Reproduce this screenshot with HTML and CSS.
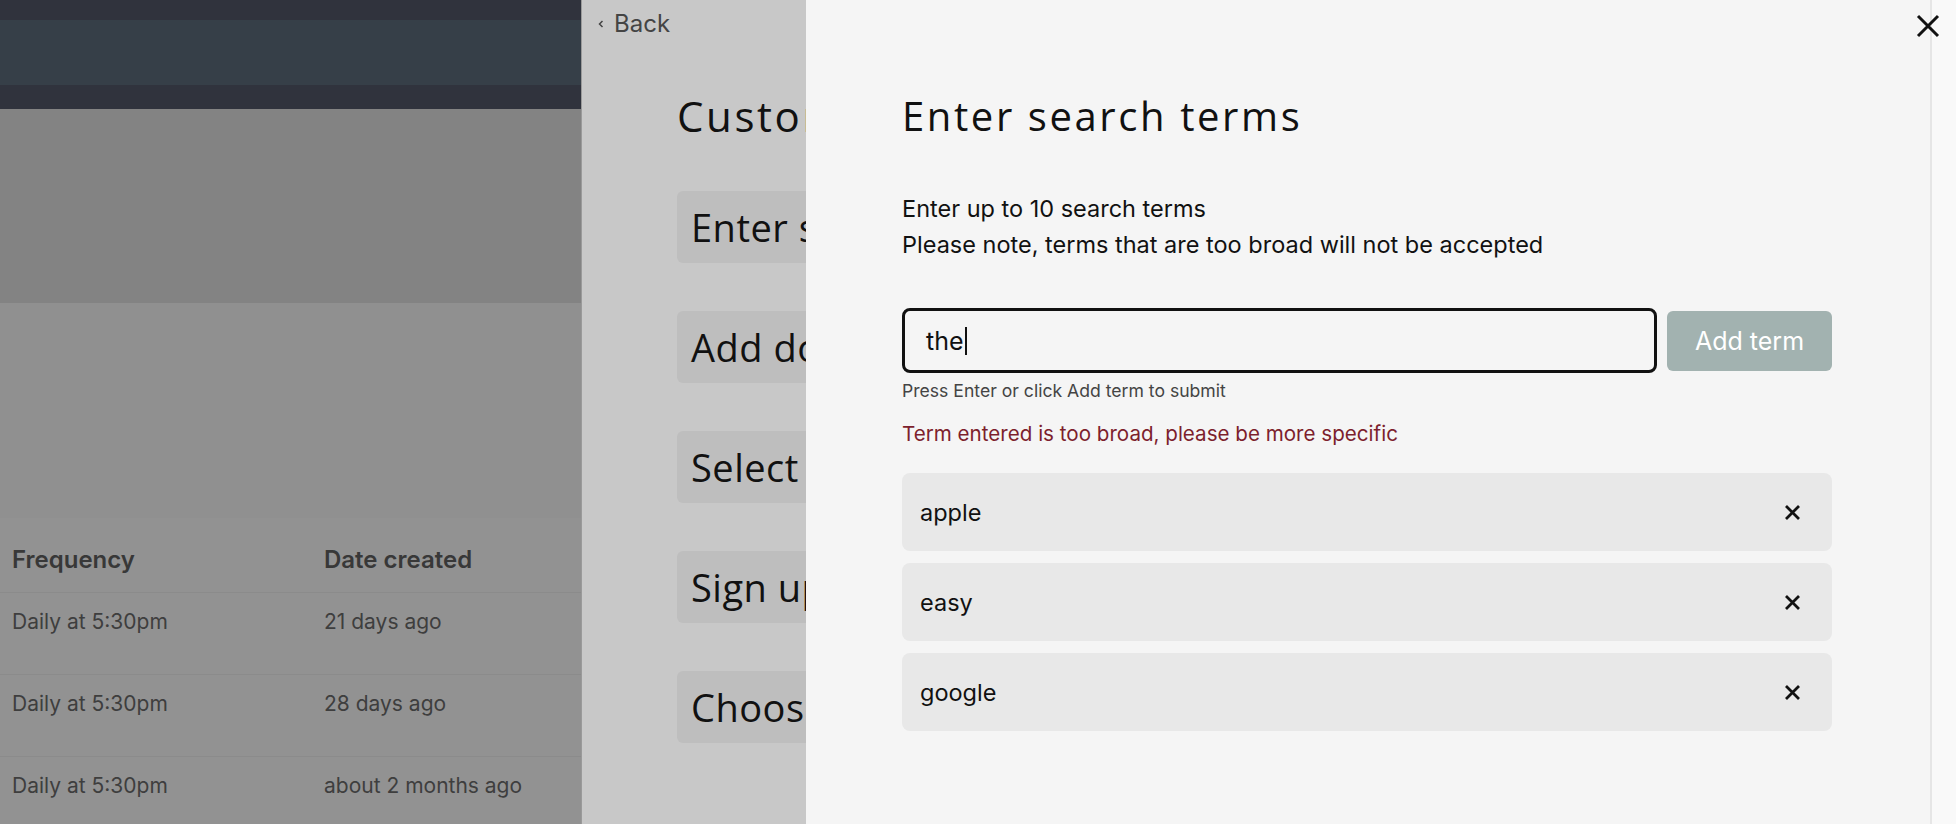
FILE: index.html
```html
<!DOCTYPE html>
<html lang="en">
<head>
    <meta charset="UTF-8">
    <meta name="viewport" content="width=device-width, initial-scale=1.0">
    <title>Alerts</title>
    <link rel="stylesheet" href="styles.css">
</head>
<body>
    <div class="app">
        <header class="topbar">
            <div class="topbar-inner"></div>
        </header>
        <section class="hero"></section>
        <section class="alerts">
            <div class="alerts-intro"></div>
            <table class="alert-table">
                <thead>
                    <tr><th>Frequency</th><th>Date created</th></tr>
                </thead>
                <tbody>
                    <tr><td>Daily at 5:30pm</td><td>21 days ago</td></tr>
                    <tr><td>Daily at 5:30pm</td><td>28 days ago</td></tr>
                    <tr><td>Daily at 5:30pm</td><td>about 2 months ago</td></tr>
                </tbody>
            </table>
        </section>
    </div>

    <!-- first step of the wizard, pushed back behind the open step -->
    <aside class="drawer drawer-back">
        <a class="back-link" href="#">
            <svg width="8" height="10" viewBox="0 0 8 10"><path d="M5.5 2 L2.5 5 L5.5 8" fill="none" stroke="#444" stroke-width="1.5"/></svg>
            Back
        </a>
        <div class="drawer-back-body">
            <h2 class="back-title">Customise alert</h2>
            <div class="step-box">Enter search terms</div>
            <div class="step-box">Add domains</div>
            <div class="step-box">Select sources</div>
            <div class="step-box">Sign up for alerts</div>
            <div class="step-box">Choose frequency</div>
        </div>
    </aside>

    <aside class="drawer drawer-front">
        <div class="drawer-body">
            <h1>Enter search terms</h1>
            <p class="intro">Enter up to 10 search terms<br>Please note, terms that are too broad will not be accepted</p>

            <div class="term-row">
                <div class="term-input"><span>the</span><span class="caret"></span></div>
                <button type="button" class="add-btn">Add term</button>
            </div>
            <p class="hint">Press Enter or click Add term to submit</p>
            <p class="error">Term entered is too broad, please be more specific</p>

            <ul class="term-list">
                <li>apple
                    <svg width="17" height="17" viewBox="0 0 17 17"><path d="M2 2 L15 15 M15 2 L2 15" stroke="#111" stroke-width="2.8"/></svg>
                </li>
                <li>easy
                    <svg width="17" height="17" viewBox="0 0 17 17"><path d="M2 2 L15 15 M15 2 L2 15" stroke="#111" stroke-width="2.8"/></svg>
                </li>
                <li>google
                    <svg width="17" height="17" viewBox="0 0 17 17"><path d="M2 2 L15 15 M15 2 L2 15" stroke="#111" stroke-width="2.8"/></svg>
                </li>
            </ul>
        </div>
        <div class="drawer-rail"></div>
        <button type="button" class="close-btn">
            <svg width="24" height="24" viewBox="0 0 24 24"><path d="M2 2 L22 22 M22 2 L2 22" stroke="#111" stroke-width="3"/></svg>
        </button>
    </aside>
</body>
</html>
```

FILE: styles.css
```css
body {
    margin: 0;
    font-family: Inter, "Liberation Sans", sans-serif;
    background-color: #929292;
    height: 824px;
    overflow: hidden;
}

/* page under the drawers (already dimmed) */
.topbar {
    background: #30333d;
    padding: 20px 0 24px;
}
.topbar-inner {
    height: 65px;
    background: #363f48;
}
.hero {
    height: 194px;
    background: #838383;
}
.alerts-intro {
    height: 215px;
    background: #909090;
}
.alert-table {
    width: 1200px;
    border-collapse: collapse;
    font-size: 21px;
    line-height: 24px;
    color: #3e3e3e;
}
.alert-table th {
    text-align: left;
    font-size: 24px;
    font-weight: 600;
    color: #383838;
    padding: 30px 12px 20px;
}
.alert-table th:first-child,
.alert-table td:first-child {
    width: 288px;
}
.alert-table td {
    padding: 17px 12px 40px;
    border-top: 1px solid #8b8b8b;
}

.drawer {
    position: fixed;
    top: 0;
    bottom: 0;
    right: 0;
    box-sizing: border-box;
}

/* back step */
.drawer-back {
    left: 581px;
    background: #c8c8c8;
    border-left: 1px solid #9a9a9a;
    overflow: hidden;
}
.back-link {
    display: flex;
    align-items: center;
    gap: 9px;
    padding: 8px 0 0 15px;
    font-size: 24px;
    line-height: 32px;
    color: #444;
    text-decoration: none;
}
.drawer-back-body {
    padding-left: 95px;
}
.back-title {
    margin: 50px 0 49px;
    font-family: "Open Sans", sans-serif;
    font-weight: 400;
    font-size: 42px;
    line-height: 52px;
    letter-spacing: 2.6px;
    color: #111;
    white-space: nowrap;
}
.step-box {
    width: 600px;
    height: 72px;
    margin-bottom: 48px;
    padding: 0 14px;
    border-radius: 6px;
    background: #bebebe;
    font-family: "Open Sans", sans-serif;
    font-size: 38px;
    line-height: 72px;
    letter-spacing: 0.5px;
    color: #111;
    white-space: nowrap;
}

/* current step */
.drawer-front {
    left: 806px;
    background: #f5f5f5;
    display: flex;
}
.drawer-body {
    flex: 1;
    padding: 92px 98px 0 96px;
}
.drawer-rail {
    width: 24px;
    border-left: 2px solid #e6e6e6;
    background: #f9f9f9;
}
.close-btn {
    position: absolute;
    top: 14px;
    right: 16px;
    padding: 0;
    border: none;
    background: none;
    width: 24px;
    height: 24px;
    cursor: pointer;
}
.close-btn svg {
    display: block;
}

h1 {
    margin: 0 0 51px;
    font-family: "Open Sans", sans-serif;
    font-weight: 400;
    font-size: 40px;
    line-height: 48px;
    letter-spacing: 2.6px;
    color: #111;
}
.intro {
    margin: 0;
    font-size: 23.5px;
    line-height: 36px;
    color: #111;
}
.term-row {
    display: flex;
    align-items: center;
    gap: 10px;
    margin-top: 45px;
}
.term-input {
    flex: 1;
    height: 65px;
    box-sizing: border-box;
    display: flex;
    align-items: center;
    padding: 0 21px;
    border: 3px solid #111;
    border-radius: 8px;
    font-size: 25px;
    color: #111;
}
.caret {
    width: 2px;
    height: 28px;
    margin-left: 1px;
    background: #111;
}
.add-btn {
    width: 165px;
    height: 60px;
    border: none;
    border-radius: 6px;
    background: #a2b2b0;
    color: white;
    font-family: inherit;
    font-size: 25px;
    cursor: pointer;
}
.hint {
    margin: 6px 0 0;
    font-size: 17.6px;
    line-height: 24px;
    color: #444;
}
.error {
    margin: 16px 0 0;
    font-size: 20.6px;
    line-height: 30px;
    color: #7d1f2d;
}
.term-list {
    list-style: none;
    margin: 24px 0 0;
    padding: 0;
    display: flex;
    flex-direction: column;
    gap: 12px;
}
.term-list li {
    height: 78px;
    display: flex;
    align-items: center;
    justify-content: space-between;
    padding: 0 31px 0 18px;
    border-radius: 8px;
    background: #e8e8e8;
    font-size: 23.5px;
    color: #111;
}
```
